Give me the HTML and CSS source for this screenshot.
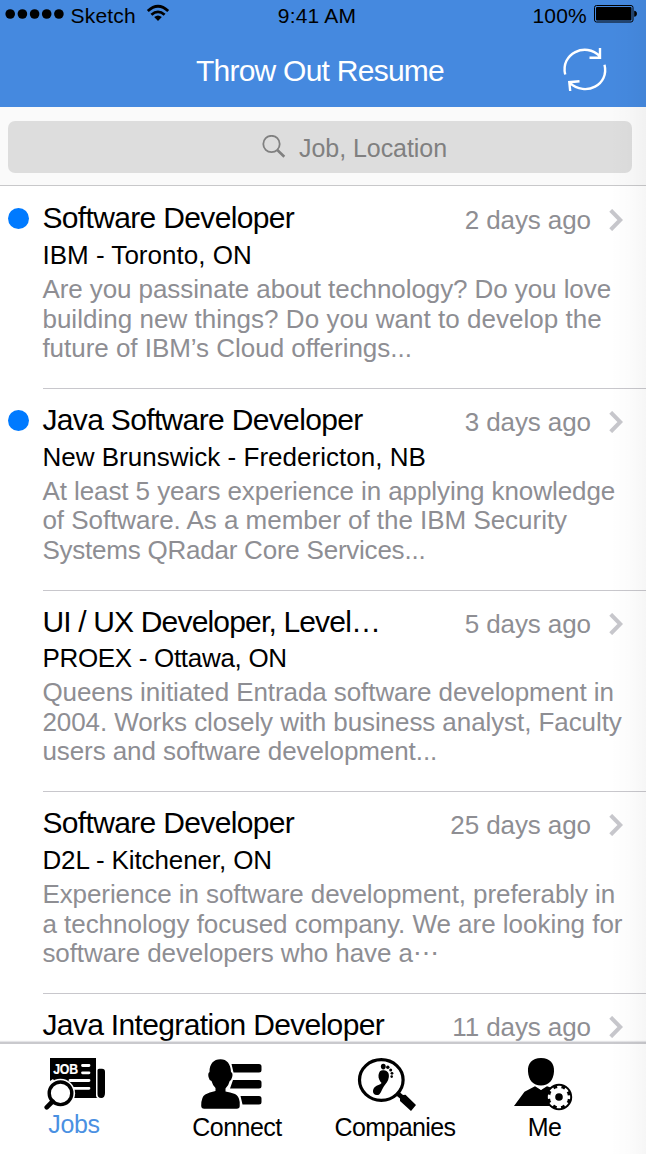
FILE: index.html
```html
<!DOCTYPE html>
<html lang="en">
<head>
<meta charset="utf-8">
<title>Throw Out Resume</title>
<link rel="stylesheet" href="styles.css">
</head>
<body>
<div class="screen">
  <header class="header">
    <div class="status">
      <div class="carrier">
        <svg class="signal" width="60" height="12" viewBox="0 0 60 12"><circle cx="5.2" cy="6" r="4.8"/><circle cx="17.4" cy="6" r="4.8"/><circle cx="29.6" cy="6" r="4.8"/><circle cx="41.7" cy="6" r="4.8"/><circle cx="53.9" cy="6" r="4.8"/></svg>
        <span class="carrier-name">Sketch</span>
        <svg class="wifi" width="24" height="18" viewBox="0 0 24 18"><g fill="none" stroke="#000" stroke-width="2.8"><path d="M1.8 7Q12 -2.4 22.2 7"/><path d="M5.4 10.8Q12 5 18.6 10.8"/></g><path d="M8.2 13.1Q12 9.9 15.8 13.1L12 17z"/></svg>
      </div>
      <span class="clock">9:41 AM</span>
      <div class="power">
        <span class="percent">100%</span>
        <svg class="battery" width="44" height="18" viewBox="0 0 44 18"><rect x=".5" y=".5" width="38.5" height="16.5" rx="2" fill="none" stroke="#000"/><rect x="2" y="2" width="35.5" height="13.5" rx="1"/><path d="M40.2 5.8q2.7.3 2.7 3t-2.7 3z"/></svg>
      </div>
    </div>
    <div class="nav">
      <h1 class="nav-title">Throw Out Resume</h1>
      <svg class="refresh" width="46" height="46" viewBox="0 0 46 46" fill="none" stroke="#fff" stroke-width="2.4"><path d="M3.2 27.5C-1.8 6.8 23.5-5.5 38 9.3M38 1V10.8H27.5M42.5 17.7C47.5 37.5 24 50.5 7.3 35.7M17.5 34.3L7.3 35.2L8.2 44"/></svg>
    </div>
  </header>
  <div class="search">
    <div class="search-field">
      <svg width="24" height="24" viewBox="0 0 24 24" fill="none" stroke="#808080"><circle cx="9.5" cy="9" r="8.2" stroke-width="1.8"/><path d="M15.3 15L22.3 21.8" stroke-width="2.6"/></svg>
      <span>Job, Location</span>
    </div>
  </div>
  <main class="list">
    <article class="job unread">
      <div class="job-top"><h2 class="job-title">Software Developer</h2><span class="age">2 days ago</span><svg class="chev" width="14" height="22" viewBox="0 0 14 22"><path d="M1.7 1.3L11.3 11L1.7 20.7"/></svg></div>
      <h3 class="place">IBM - Toronto, ON</h3>
      <p class="desc"><span>Are you passinate about technology? Do you love</span><span class="loose">building new things? Do you want to develop the</span><span class="airy">future of IBM’s Cloud offerings...</span></p>
    </article>
    <article class="job unread">
      <div class="job-top"><h2 class="job-title">Java Software Developer</h2><span class="age">3 days ago</span><svg class="chev" width="14" height="22" viewBox="0 0 14 22"><path d="M1.7 1.3L11.3 11L1.7 20.7"/></svg></div>
      <h3 class="place">New Brunswick - Fredericton, NB</h3>
      <p class="desc"><span>At least 5 years experience in applying knowledge</span><span class="airy">of Software. As a member of the IBM Security</span><span class="tight">Systems QRadar Core Services...</span></p>
    </article>
    <article class="job">
      <div class="job-top"><h2 class="job-title title-tight">UI / UX Developer, Level…</h2><span class="age">5 days ago</span><svg class="chev" width="14" height="22" viewBox="0 0 14 22"><path d="M1.7 1.3L11.3 11L1.7 20.7"/></svg></div>
      <h3 class="place place-tight">PROEX - Ottawa, ON</h3>
      <p class="desc"><span>Queens initiated Entrada software development in</span><span>2004. Works closely with business analyst, Faculty</span><span>users and software development...</span></p>
    </article>
    <article class="job">
      <div class="job-top"><h2 class="job-title">Software Developer</h2><span class="age">25 days ago</span><svg class="chev" width="14" height="22" viewBox="0 0 14 22"><path d="M1.7 1.3L11.3 11L1.7 20.7"/></svg></div>
      <h3 class="place place-snug">D2L - Kitchener, ON</h3>
      <p class="desc"><span>Experience in software development, preferably in</span><span class="airy">a technology focused company. We are looking for</span><span>software developers who have a⋯</span></p>
    </article>
    <article class="job">
      <div class="job-top"><h2 class="job-title">Java Integration Developer</h2><span class="age">11 days ago</span><svg class="chev" width="14" height="22" viewBox="0 0 14 22"><path d="M1.7 1.3L11.3 11L1.7 20.7"/></svg></div>
    </article>
  </main>
  <nav class="tabs">
    <a class="tab jobs active">
      <svg width="62" height="54" viewBox="0 0 62 54"><path d="M6 1H52V38.5q0 2 1.5 2.5H6zM53.5 13.2q0-1.5 1.5-1.5h3q3 0 3 3V36q0 5-3.8 5-3.7 0-3.7-4z"/><path d="M38.5 8.5H45M38.5 15.8H45M26 23.5H45M29 31.3H45" stroke="#fff" stroke-width="2.8" stroke-linecap="round"/><path d="M2 54V29H6V24L9 22 27 46V54z" fill="#fff"/><text class="icon-word" x="9.3" y="17" textLength="24.5" lengthAdjust="spacingAndGlyphs">JOB</text><circle cx="16.5" cy="36.3" r="14.6" fill="#fff"/><circle cx="16.5" cy="36.3" r="11.3" fill="#fff" stroke="#000" stroke-width="3.4"/><path d="M8.5 44.5L2.7 50.3" stroke="#000" stroke-width="4.6" stroke-linecap="round"/></svg>
      <span>Jobs</span>
    </a>
    <a class="tab connect">
      <svg width="62" height="50" viewBox="0 0 62 50"><path d="M31.5 5H59q2.5 0 2.5 2.5v3.5q0 2.5-2.5 2.5H33.5zM33 21H59q2.5 0 2.5 2.5v3.5q0 2.5-2.5 2.5H30zM40.5 37H59q2.5 0 2.5 2.5v3.5q0 2.5-2.5 2.5H42.5z"/><path d="M20.5.3C27 .3 30.5 5 31 13q2.2 1 1.2 5-.8 3.2-2.5 4-1.2 5-4.2 7.5v3q4.5.8 9.5 2.5 4 2 4.7 8v4q0 2.8-3 2.8H4.2q-3 0-3-3 0-9 4-11.3 4-2.5 10.3-3.5v-3q-3-3-4-7-2.5-1-3-4-.8-4 1-5C9.5 5 13.5.3 20.5.3z"/></svg>
      <span>Connect</span>
    </a>
    <a class="tab companies">
      <svg width="60" height="54" viewBox="0 0 60 54"><ellipse cx="24.3" cy="22" rx="21.8" ry="20.3" fill="none" stroke="#000" stroke-width="3.2"/><path d="M39 37.3L42.5 34 46 37 48.5 36.8 59 47 54 53 43 43V40.5z"/><path d="M21.5 17c.5-4 2.5-5.2 5.3-4.8 4.2.4 5.6 3.5 5 7-.5 4-2.8 6-5 9.3-3 4.8-3 8.8-7.1 8.6-4.5-.3-4.6-5.5-1.8-8.1 2.1-1.8 5.2-1.8 6.7-3.9-1.8-2-3.5-4.6-3.1-8.1z"/><ellipse cx="26.3" cy="8.6" rx="2.4" ry="2.8"/><circle cx="30.8" cy="9.3" r="1.7"/><circle cx="33.7" cy="12" r="1.5"/><circle cx="35" cy="15.3" r="1.4"/><circle cx="34.7" cy="18.6" r="1.3"/></svg>
      <span>Companies</span>
    </a>
    <a class="tab me">
      <svg width="62" height="54" viewBox="0 0 62 54"><path d="M28 1C37 1 41.5 6.5 41 14.5 40.5 23 36 28.5 28 28.5S15.5 23 15 14.5C14.5 6.5 19 1 28 1z"/><path d="M1 49L11.5 34.7 22 29.3 28 33 34 29.3 42 32 39 49z"/><path d="M23.2 28.5L28 32.8 32.8 28.5 28 30z" fill="#fff"/><circle cx="46" cy="40" r="13.2" /><circle cx="46" cy="40" r="6.5" fill="none" stroke="#fff" stroke-width="5.4"/><circle cx="46" cy="40" r="9.9" fill="none" stroke="#fff" stroke-width="2.6" stroke-dasharray="4.2 3.575" stroke-dashoffset="2.1"/></svg>
      <span>Me</span>
    </a>
  </nav>
  <div class="edge"></div>
</div>
</body>
</html>
```
FILE: styles.css
```css
* { box-sizing: border-box; }
body { margin: 0; font-family: "Liberation Sans", Arial, sans-serif; }
h1, h2, h3, p { margin: 0; font-weight: 400; }
svg { display: block; flex: none; }
.screen { position: relative; width: 646px; height: 1154px; overflow: hidden; display: flex; flex-direction: column; background: #fff; }
.header { height: 107px; flex: none; background: #4589df; }
.status { height: 32px; display: grid; grid-template-columns: 1fr auto 1fr; font-size: 21px; line-height: 32px; padding: 0 8px 0 5px; }
.carrier, .power { display: flex; }
.signal { margin-top: 8px; }
.carrier-name { margin-left: 5.5px; letter-spacing: .2px; }
.wifi { margin: 4px 0 0 10px; }
.clock { padding-right: 9px; letter-spacing: .2px; }
.power { justify-content: flex-end; }
.percent { letter-spacing: .2px; margin-right: 7px; }
.battery { margin-top: 5px; }
.nav { height: 75px; display: flex; align-items: flex-start; justify-content: flex-end; padding-right: 38px; color: #fff; }
.nav-title { font-size: 30px; line-height: 34px; margin: 22px 118px 0 0; letter-spacing: -.75px; white-space: nowrap; }
.refresh { margin-top: 15px; }
.search { flex: none; height: 79px; padding: 14px 14px 0 8px; background: #fafafa; border-bottom: 1px solid #c8c8ca; }
.search-field { height: 52px; border-radius: 7px; background: #ddd; display: flex; gap: 13px; padding: 0 0 0 254px; color: #808080; font-size: 25px; line-height: 55px; letter-spacing: -.05px; }
.search-field svg { margin-top: 14px; }
.list { flex: none; height: 856px; overflow: hidden; }
.job { position: relative; height: 201.75px; padding: 15px 0 0 42.4px; white-space: nowrap; }
.job::after { content: ""; position: absolute; left: 43px; right: 0; bottom: -1px; height: 1px; background: #c8c7cc; }
.unread::before { content: ""; position: absolute; left: 8px; top: 22px; width: 21px; height: 21px; border-radius: 50%; background: #007aff; }
.job-top { height: 36px; display: flex; padding-right: 22.6px; }
.job-title { flex: 1; font-size: 30px; line-height: 34px; letter-spacing: -.65px; }
.title-tight { letter-spacing: -.83px; }
.age { font-size: 26px; line-height: 38px; color: #8e8e93; margin-right: 18.5px; letter-spacing: -.1px; }
.chev { margin-top: 8px; }
.chev path { fill: none; stroke: #c7c7cc; stroke-width: 4; }
.place { font-size: 26px; line-height: 36px; letter-spacing: .02px; }
.place-tight { letter-spacing: -.31px; margin-top: -.4px; }
.place-snug { letter-spacing: -.11px; }
.desc { font-size: 26px; line-height: 29.5px; margin-top: 2px; color: #8e8e93; letter-spacing: -.08px; }
.desc span { display: block; width: max-content; }
.desc .loose { letter-spacing: .03px; }
.desc .airy { letter-spacing: -.03px; }
.desc .tight { letter-spacing: -.23px; }
.tabs { position: relative; flex: 1; display: flex; background: #fff; border-top: 2px solid #c9c9cd; box-shadow: 0 -1px 1px #e4e4e7; }
.tab { display: flex; flex-direction: column; align-items: center; font-size: 25px; line-height: 28px; color: #000; padding-top: 13px; letter-spacing: -.5px; }
.tab svg { margin-bottom: 2px; }
.jobs { width: 148px; letter-spacing: -.3px; }
.jobs svg { margin: 0 0 -1px 2px; }
.connect { width: 178px; padding-top: 15px; }
.connect svg { margin: 0 0 4px -12px; }
.companies { width: 138px; padding-top: 14px; letter-spacing: -.6px; }
.companies svg { margin: 0 0 1px -16px; }
.me { width: 161px; }
.me svg { margin: 0 2px 2px 0; }
.active { color: #4a90e2; }
.icon-word { font: bold 14px "Liberation Sans", Arial, sans-serif; fill: #fff; stroke: #fff; stroke-width: .2px; }
.edge { position: absolute; top: 0; right: 0; width: 36px; height: 1154px; background: linear-gradient(to right, rgba(0,0,0,0), rgba(0,0,0,.01) 50%, rgba(0,0,0,.035)); }
```
